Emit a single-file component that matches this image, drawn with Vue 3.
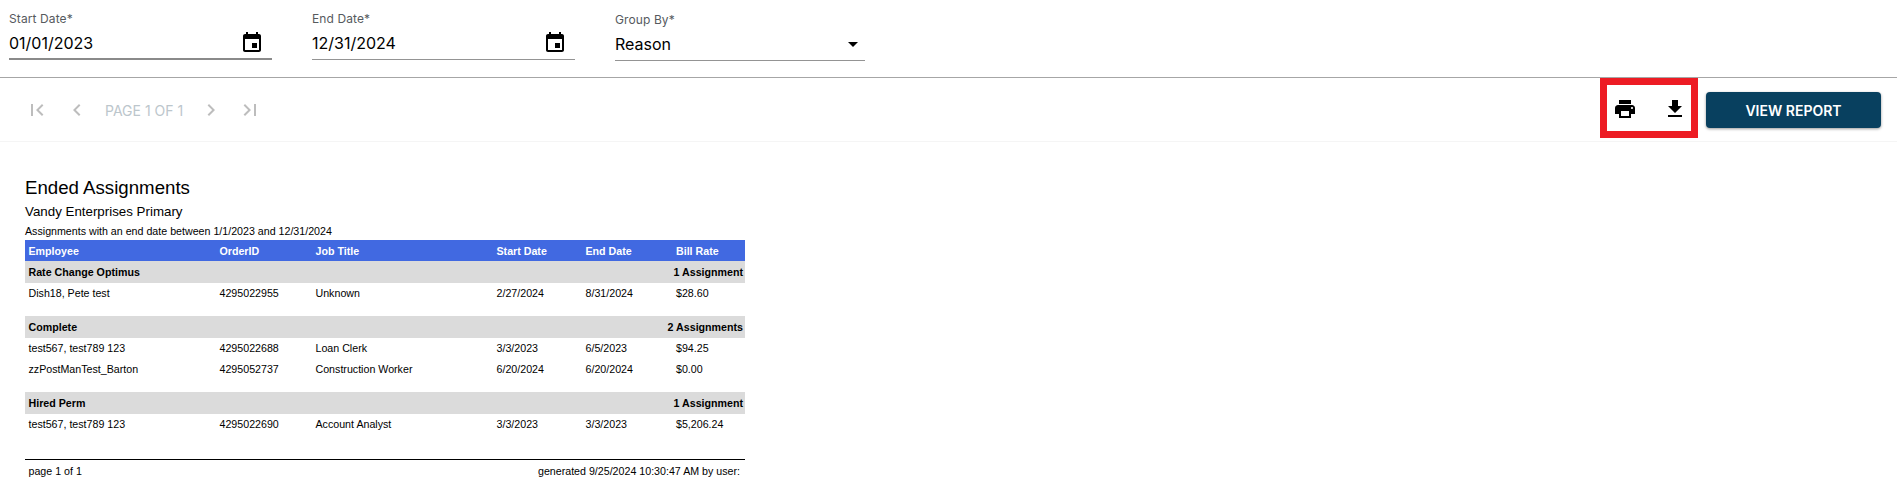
<script setup>
const paths = {
  event: 'M17 12h-5v5h5v-5zM16 1v2H8V1H6v2H5c-1.11 0-1.99.9-1.99 2L3 19c0 1.1.89 2 2 2h14c1.1 0 2-.9 2-2V5c0-1.1-.9-2-2-2h-1V1h-2zm3 18H5V8h14v11z',
  print: 'M19 8H5c-1.66 0-3 1.34-3 3v6h4v4h12v-4h4v-6c0-1.66-1.34-3-3-3zm-3 11H8v-5h8v5zm3-7c-.55 0-1-.45-1-1s.45-1 1-1 1 .45 1 1-.45 1-1 1zm-1-9H6v4h12V3z',
  download: 'M19 9h-4V3H9v6H5l7 7 7-7zM5 18v2h14v-2H5z',
  first: 'M18.41 16.59L13.82 12l4.59-4.59L17 6l-6 6 6 6zM6 6h2v12H6z',
  prev: 'M15.41 7.41L14 6l-6 6 6 6 1.41-1.41L10.83 12z',
  next: 'M10 6L8.59 7.41 13.17 12l-4.58 4.59L10 18l6-6z',
  last: 'M5.59 7.41L10.18 12l-4.59 4.59L7 18l6-6-6-6zM16 6h2v12h-2z',
  drop: 'M7 10l5 5 5-5z'
}
const groups = [
  { name: 'Rate Change Optimus', count: '1 Assignment', rows: [
    ['Dish18, Pete test', '4295022955', 'Unknown', '2/27/2024', '8/31/2024', '$28.60']
  ]},
  { name: 'Complete', count: '2 Assignments', rows: [
    ['test567, test789 123', '4295022688', 'Loan Clerk', '3/3/2023', '6/5/2023', '$94.25'],
    ['zzPostManTest_Barton', '4295052737', 'Construction Worker', '6/20/2024', '6/20/2024', '$0.00']
  ]},
  { name: 'Hired Perm', count: '1 Assignment', rows: [
    ['test567, test789 123', '4295022690', 'Account Analyst', '3/3/2023', '3/3/2023', '$5,206.24']
  ]}
]
const heads = ['Employee', 'OrderID', 'Job Title', 'Start Date', 'End Date', 'Bill Rate']
</script>

<template>
  <div class="page">
    <div class="filters">
      <div class="field date active">
        <label>Start Date*</label>
        <div class="control">
          <span>01/01/2023</span>
          <svg class="ic" viewBox="0 0 24 24"><path :d="paths.event" /></svg>
        </div>
      </div>
      <div class="field date">
        <label>End Date*</label>
        <div class="control">
          <span>12/31/2024</span>
          <svg class="ic" viewBox="0 0 24 24"><path :d="paths.event" /></svg>
        </div>
      </div>
      <div class="field select">
        <label>Group By*</label>
        <div class="control">
          <span>Reason</span>
          <svg class="ic" viewBox="0 0 24 24"><path :d="paths.drop" /></svg>
        </div>
      </div>
    </div>

    <div class="toolbar">
      <div class="pager">
        <svg class="ic" viewBox="0 0 24 24"><path :d="paths.first" /></svg>
        <svg class="ic" viewBox="0 0 24 24"><path :d="paths.prev" /></svg>
        <span class="pagetext">PAGE 1 OF 1</span>
        <svg class="ic" viewBox="0 0 24 24"><path :d="paths.next" /></svg>
        <svg class="ic" viewBox="0 0 24 24"><path :d="paths.last" /></svg>
      </div>
      <div class="actions">
        <div class="redbox">
          <svg class="ic" viewBox="0 0 24 24"><path :d="paths.print" /></svg>
          <svg class="ic" viewBox="0 0 24 24"><path :d="paths.download" /></svg>
        </div>
        <button class="view">VIEW REPORT</button>
      </div>
    </div>

    <div class="report">
      <h1>Ended Assignments</h1>
      <h2>Vandy Enterprises Primary</h2>
      <p class="desc">Assignments with an end date between 1/1/2023 and 12/31/2024</p>
      <div class="tbl">
        <div class="row head">
          <span v-for="h in heads" :key="h">{{ h }}</span>
        </div>
        <div v-for="g in groups" :key="g.name" class="group">
          <div class="gh"><span>{{ g.name }}</span><span>{{ g.count }}</span></div>
          <div v-for="r in g.rows" :key="r[1]" class="row body">
            <span v-for="(c, i) in r" :key="i">{{ c }}</span>
          </div>
        </div>
      </div>
      <div class="foot">
        <span>page 1 of 1</span>
        <span class="gen">generated 9/25/2024 10:30:47 AM by user:</span>
      </div>
    </div>
  </div>
</template>

<style>
html, body { margin: 0; background: #fff; }
</style>

<style scoped>
.page { width: 1897px; height: 490px; overflow: hidden; font-family: Inter, "Liberation Sans", sans-serif; color: #000; }
.ic { display: block; width: 24px; height: 24px; fill: currentColor; flex: none; }

.filters { display: flex; gap: 40px; padding: 11px 0 0 9px; height: 66px; box-sizing: content-box; border-bottom: 1px solid #a6a6a6; }
.field { width: 263px; }
.field label { display: block; font-size: 12px; line-height: 16px; letter-spacing: 0.1px; color: #565a5e; }
.control { display: flex; align-items: center; justify-content: space-between; height: 32px; margin-top: 0; border-bottom: 1px solid #949494; font-size: 16px; }
.date.active .control { border-bottom: 2px solid #8a8a8a; height: 31px; }
.date .ic { margin-right: 8px; }
.select { width: 250px; margin-top: 1px; }
.select .control { height: 32px; }
.select .ic { margin-right: 0; }

.toolbar { display: flex; justify-content: space-between; align-items: flex-start; height: 63px; border-bottom: 1px solid #f5f5f5; padding-right: 16px; }
.pager { display: flex; align-items: center; height: 64px; color: #bdbdbd; padding-left: 25px; margin-top: 0; }
.pager .ic:nth-child(2) { margin-left: 16px; }
.pagetext { font-size: 14px; color: #bcc6cc; margin: 0 16px 0 16px; }
.pager .ic:nth-child(5) { margin-left: 15px; }
.actions { display: flex; align-items: flex-start; gap: 8px; }
.redbox { display: flex; align-items: center; gap: 26px; width: 82px; height: 44px; padding: 2px 0 0 2px; border: 7px solid #ed1c24; box-sizing: content-box; justify-content: center; }
.view { width: 175px; height: 36px; margin-top: 14px; border: 0; border-radius: 4px; background: #08405f; color: #fff; font: 600 14px Inter, "Liberation Sans", sans-serif; box-shadow: 0 1px 3px rgba(0,0,0,.4); }

.report { width: 720px; margin-left: 25px; font-family: "Liberation Sans", Arial, sans-serif; }
.report h1 { margin: 0; padding-top: 33px; font-size: 18.67px; font-weight: 400; line-height: 26px; }
.report h2 { margin: 0; font-size: 13.33px; font-weight: 400; line-height: 22px; height: 23px; }
.desc { margin: 0; font-size: 10.67px; line-height: 15px; height: 16px; }
.tbl { font-size: 10.67px; }
.row { display: grid; grid-template-columns: 191px 96px 181px 89px 90px 73px; height: 21px; align-items: center; }
.row.body { box-sizing: border-box; padding-bottom: 1px; }
.row span { padding-left: 3.5px; }
.row span:last-child { padding-left: 4px; }
.head { background: #4169e1; color: #fff; font-weight: 700; }
.gh { display: flex; justify-content: space-between; align-items: center; height: 22px; background: #dbdbdb; font-weight: 700; padding: 0 2px 0 3.5px; }
.group { padding-bottom: 12px; }
.foot { display: flex; justify-content: space-between; margin-top: 12px; border-top: 1px solid #000; padding: 5px 5px 0 3.5px; font-size: 10.67px; }
</style>
